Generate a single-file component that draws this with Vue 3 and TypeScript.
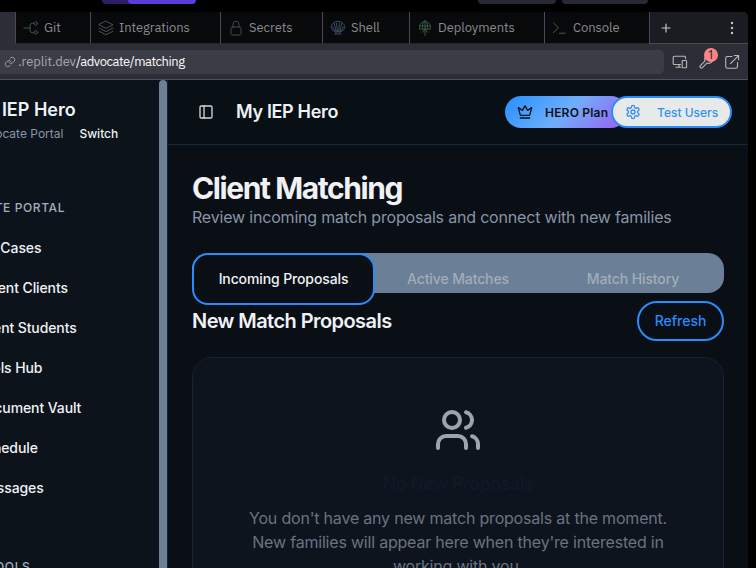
<script setup lang="ts">
interface ToolTab {
  name: string
  icon: string
  width: number
}

const tabs: ToolTab[] = [
  { name: 'Git', icon: 'git', width: 75 },
  { name: 'Integrations', icon: 'layers', width: 130 },
  { name: 'Secrets', icon: 'lock', width: 102 },
  { name: 'Shell', icon: 'shell', width: 87 },
  { name: 'Deployments', icon: 'deploy', width: 135 },
  { name: 'Console', icon: 'console', width: 105 },
]

const navItems: string[] = [
  'My Cases',
  'Parent Clients',
  'Client Students',
  'Tools Hub',
  'Document Vault',
  'Schedule',
  'Messages',
]
</script>

<template>
  <div class="screen">
    <div class="topstrip">
      <div class="pill purple"><span></span></div>
      <div class="pill grey first"></div>
      <div class="pill grey second"></div>
    </div>

    <div class="pane">
      <div class="tabs">
        <div class="tab-active"></div>
        <div v-for="tab in tabs" :key="tab.name" class="tab" :style="{ width: tab.width + 'px' }">
          <svg class="tab-icon" :class="tab.icon" viewBox="0 0 16 16">
            <g v-if="tab.icon === 'git'">
              <path d="M1 8h6M11 3.3H9.3Q7 3.3 7 5.6v4.8q0 2.3 2.3 2.3H11" />
              <circle cx="12.7" cy="3.5" r="1.7" /><circle cx="12.7" cy="12.3" r="1.7" />
            </g>
            <g v-else-if="tab.icon === 'layers'">
              <path d="M8 1.2L15 4.8 8 8.4 1 4.8zM1 8l7 3.6L15 8M1 11.2l7 3.6 7-3.6" />
            </g>
            <g v-else-if="tab.icon === 'lock'">
              <rect x="3" y="7" width="10" height="8" rx="1.5" />
              <path d="M5 7V4.2a3 3 0 0 1 6 0V7" />
            </g>
            <g v-else-if="tab.icon === 'shell'">
              <path d="M6 12.4L2 9.5C.2 6.5 2 3.6 4 3c1-1.6 2.5-2 4-1.4C9.500 1 11 1.400 12 3c2 .6 3.800 3.500 2 6.500l-4 2.900 1 1.600H5z" />
              <path d="M6.500 12L4 3M7.500 12L6.500 3M8.500 12l1-9M9.500 12L12 3M6 12L2 6.500M10 12l4-5.500" />
            </g>
            <g v-else-if="tab.icon === 'deploy'">
              <path d="M3 9.700a5.600 5.600 0 1 1 10 0M2.500 6h11M3.200 9h9.600M8 .900v14.500M8 .900C5 3 5 7 6 9M8 .900c3 2.100 3 6.100 2 8.100M5.300 12.300L8 9l2.700 3.300" />
            </g>
            <g v-else><path d="M1.500 3l5 4.800-5 4.800M7.500 13.200H13" /></g>
          </svg>
          <span>{{ tab.name }}</span>
        </div>
        <div class="tab-actions">
          <svg class="plus" viewBox="0 0 10 10"><path d="M5 1v8M1 5h8" /></svg>
          <svg class="dots" viewBox="0 0 4 14">
            <circle cx="2" cy="2" r="1.200" /><circle cx="2" cy="7" r="1.200" /><circle cx="2" cy="12" r="1.200" />
          </svg>
        </div>
      </div>

      <div class="urlbar">
        <div class="url">
          <svg class="link" viewBox="0 0 24 24">
            <path d="M10 13a5 5 0 0 0 7.500.500l3-3a5 5 0 0 0-7-7l-1.700 1.700M14 11a5 5 0 0 0-7.500-.500l-3 3a5 5 0 0 0 7 7l1.700-1.700" />
          </svg>
          <span class="host">.replit.dev</span><span class="path">/advocate/matching</span>
        </div>
        <svg class="tool devices" viewBox="0 0 16 16">
          <path d="M8.500 10.500H2.200Q1.200 10.500 1.200 9.500V3.200q0-1 1-1h10.300q1 0 1 1v1.300M7 10.500v2.700M4 13.300h4.500" />
          <rect x="10.200" y="6.500" width="4.400" height="7.300" rx=".7" />
        </svg>
        <div class="wrench">
          <svg class="tool" viewBox="0 0 24 24">
            <path d="M14.700 6.300a1 1 0 0 0 0 1.400l1.600 1.600a1 1 0 0 0 1.400 0l3.800-3.800a6 6 0 0 1-7.900 7.900l-6.900 6.900a2.100 2.100 0 0 1-3-3l6.900-6.900a6 6 0 0 1 7.900-7.900z" />
          </svg>
          <span class="badge">1</span>
        </div>
        <svg class="tool external" viewBox="0 0 16 16">
          <path d="M8 2.500H3.500q-1.800 0-1.800 1.800v8.200q0 1.800 1.800 1.800h8.200q1.800 0 1.800-1.800V8.500M10.300 1.500h4.300v4.300M14.500 1.600L6.500 9.600" />
        </svg>
      </div>

      <div class="app">
        <aside class="sidebar">
          <div class="sidebar-inner">
            <div class="brand">My IEP Hero</div>
            <div class="role"><span>Advocate Portal</span><b>Switch</b></div>
            <div class="group">ADVOCATE PORTAL</div>
            <nav>
              <a v-for="item in navItems" :key="item">{{ item }}</a>
            </nav>
            <div class="group tools">TOOLS</div>
          </div>
        </aside>
        <div class="scrollbar"></div>

        <main>
          <header>
            <svg class="panel" viewBox="0 0 24 24"><rect x="3" y="3" width="18" height="18" rx="2" /><path d="M9 3v18" /></svg>
            <h2>My IEP Hero</h2>
            <div class="hero">
              <svg viewBox="0 0 24 24">
                <path d="M11.562 3.266a.5.500 0 0 1 .876 0L15.390 8.870a1 1 0 0 0 1.516.294L21.183 5.500a.5.500 0 0 1 .798.519l-2.834 10.246a1 1 0 0 1-.956.734H5.810a1 1 0 0 1-.957-.734L2.020 6.020a.5.500 0 0 1 .798-.519l4.276 3.664a1 1 0 0 0 1.516-.294zM5 21h14" />
              </svg>
              <span>HERO Plan</span>
            </div>
            <div class="users">
              <svg viewBox="0 0 24 24">
                <path d="M12.220 2h-.440a2 2 0 0 0-2 2v.180a2 2 0 0 1-1 1.730l-.430.250a2 2 0 0 1-2 0l-.150-.080a2 2 0 0 0-2.730.730l-.220.380a2 2 0 0 0 .730 2.730l.150.100a2 2 0 0 1 1 1.720v.510a2 2 0 0 1-1 1.740l-.150.090a2 2 0 0 0-.730 2.730l.220.380a2 2 0 0 0 2.730.730l.150-.080a2 2 0 0 1 2 0l.430.250a2 2 0 0 1 1 1.730V20a2 2 0 0 0 2 2h.440a2 2 0 0 0 2-2v-.180a2 2 0 0 1 1-1.730l.430-.250a2 2 0 0 1 2 0l.150.080a2 2 0 0 0 2.730-.730l.220-.390a2 2 0 0 0-.730-2.730l-.150-.080a2 2 0 0 1-1-1.740v-.500a2 2 0 0 1 1-1.740l.150-.090a2 2 0 0 0 .730-2.730l-.220-.380a2 2 0 0 0-2.730-.730l-.150.080a2 2 0 0 1-2 0l-.430-.250a2 2 0 0 1-1-1.730V4a2 2 0 0 0-2-2z" />
                <circle cx="12" cy="12" r="3" />
              </svg>
              <span>Test Users</span>
            </div>
          </header>

          <section>
            <h1>Client Matching</h1>
            <p class="sub">Review incoming match proposals and connect with new families</p>
            <div class="segments">
              <div class="segment on">Incoming Proposals</div>
              <div class="segment">Active Matches</div>
              <div class="segment">Match History</div>
            </div>
            <div class="heading">
              <h3>New Match Proposals</h3>
              <button>Refresh</button>
            </div>
            <div class="card">
              <svg viewBox="0 0 24 24">
                <path d="M16 21v-2a4 4 0 0 0-4-4H6a4 4 0 0 0-4 4v2M22 21v-2a4 4 0 0 0-3-3.870M16 3.130a4 4 0 0 1 0 7.750" />
                <circle cx="9" cy="7" r="4" />
              </svg>
              <h4>No New Proposals</h4>
              <p>You don't have any new match proposals at the moment.<br>New families will appear here when they're interested in<br>working with you.</p>
            </div>
          </section>
        </main>
      </div>
    </div>
  </div>
</template>

<style>
body { margin: 0; background: #000; overflow: hidden; }
</style>

<style scoped>
* { box-sizing: border-box; }
h1, h2, h3, h4, p { margin: 0; }
svg { fill: none; stroke: currentColor; stroke-linecap: round; stroke-linejoin: round; flex: none; }
.screen { width: 756px; height: 568px; overflow: hidden; background: #000; font-family: Inter, "Liberation Sans", sans-serif; }
.topstrip { height: 12px; display: flex; padding-left: 102px; }
.pill { height: 4px; border-radius: 0 0 4px 4px; overflow: hidden; }
.purple { width: 94px; background: #2d1e67; }
.purple span { display: block; height: 4px; margin-left: 26px; background: #593cda; border-radius: 0 0 4px 4px; }
.grey { background: #282a31; }
.first { width: 78px; margin-left: 282px; }
.second { width: 86px; margin-left: 6px; }
.pane { width: 748px; height: 556px; border-radius: 0 5px 0 0; overflow: hidden; background: #2b2e35; display: flex; flex-direction: column; }
.tabs { height: 32px; display: flex; flex: none; }
.tab-active { width: 15px; background: #2b2e35; }
.tab { display: flex; align-items: center; gap: 5px; height: 32px; padding-left: 7px; background: #08090b; border-left: 1px solid #464b5c; border-bottom: 1px solid #24262c; color: #888a8e; font: 13px/18px "IBM Plex Sans", "Noto Sans", sans-serif; letter-spacing: -.06px; white-space: nowrap; }
.tab-icon { width: 16px; height: 16px; color: #4c4f54; stroke-width: 1; }
.tab-icon.git, .tab-icon.deploy { color: #3a5a45; }
.tab-icon.shell { color: #405269; stroke-width: .9; }
.tab-icon.console { color: #5b5740; }
.tab-icon.lock { color: #45484c; }
.tab-actions { flex: 1; display: flex; align-items: center; justify-content: space-between; padding: 0 14px 0 11px; background: #1b1c21; border-left: 1px solid #464b5c; border-bottom: 1px solid #464b5c; color: #c4c6ca; }
.plus { width: 10px; height: 10px; stroke-width: 1.2; }
.dots { width: 4px; height: 14px; fill: currentColor; stroke: none; }
.urlbar { height: 36px; flex: none; display: flex; align-items: center; background: #2b2e35; border-bottom: 1px solid #4c5264; color: #b6b8bc; }
.url { width: 664px; height: 24px; border-radius: 0 5px 5px 0; background: #3a3d45; display: flex; align-items: center; padding-left: 4px; font: 13px/18px "IBM Plex Sans", "Noto Sans", sans-serif; }
.link { width: 12px; height: 12px; stroke-width: 2; color: #9a9ca1; margin-right: 2px; }
.host { color: #a5a7ac; letter-spacing: -.05px; }
.path { color: #fafafa; letter-spacing: -.48px; }
.tool { width: 16px; height: 16px; stroke-width: 1.1; }
.devices { margin-left: 8px; }
.wrench { position: relative; display: flex; margin-left: 10px; }
.wrench .tool { stroke-width: 1.7; }
.badge { position: absolute; left: 6px; top: -6px; width: 14px; height: 14px; border-radius: 7px; background: #fb8584; color: #23252b; font: 12px/14px "Noto Sans", sans-serif; text-align: center; }
.external { margin-left: 10px; }
.app { flex: 1; min-height: 0; display: flex; background: #0a0e15; }
.sidebar { width: 159px; overflow: hidden; background: #0c131a; }
.sidebar-inner { margin-left: -88px; white-space: nowrap; }
.brand { padding: 18px 0 0 58px; font-size: 18px; font-weight: 600; line-height: 24px; color: #eff2f5; }
.role { display: flex; gap: 16px; padding: 3px 0 0 61px; font-size: 12px; line-height: 18px; color: #8996a7; }
.role b { font-weight: 500; color: #eff2f5; }
.group { margin-top: 57px; padding-left: 29px; font-size: 12px; line-height: 16px; font-weight: 500; letter-spacing: .6px; color: #a3afbf; }
nav { margin-top: 12px; }
nav a { display: block; height: 40px; padding-left: 64px; font-size: 14px; font-weight: 500; line-height: 40px; letter-spacing: -.1px; color: #eff2f5; }
.group.tools { margin-top: 51px; padding-left: 75px; }
.scrollbar { width: 8px; background: #6b8096; border-radius: 4px 4px 0 0; }
main { flex: 1; min-width: 0; border-left: 1px solid #142332; overflow: hidden; }
header { height: 65px; display: flex; align-items: center; padding-left: 30px; background: #080f15; border-bottom: 1px solid #12283a; }
.panel { width: 16px; height: 16px; stroke-width: 2; color: #d3d5d5; }
h2 { margin-left: 22px; width: 269px; font-size: 18px; line-height: 28px; font-weight: 600; letter-spacing: -.33px; color: #eff2f5; }
.hero, .users { display: flex; align-items: center; height: 32px; border-radius: 16px; font-size: 12px; font-weight: 500; white-space: nowrap; }
.hero { width: 122px; padding-left: 12px; gap: 12px; flex: none; background: linear-gradient(135deg, #2490ff 0%, #70aef9 50%, #9b5df2 100%); color: #0b111b; font-weight: 600; letter-spacing: .2px; }
.hero svg, .users svg { width: 16px; height: 16px; stroke-width: 2; }
.users { position: relative; flex: none; width: 121px; margin-left: -16px; padding-left: 12px; gap: 16px; border: 2px solid #288dfc; background: #e8eae9; color: #3090f7; }
section { padding: 24px 24px 0; }
h1 { height: 36px; font-size: 30px; line-height: 38px; font-weight: 700; letter-spacing: -1.42px; color: #eff1f5; }
.sub { font-size: 16px; line-height: 24px; letter-spacing: -.19px; color: #8795a6; white-space: nowrap; }
.segments { display: flex; height: 40px; margin-top: 24px; border-radius: 16px; background: #6b8096; color: #a2adba; font-size: 14px; font-weight: 500; line-height: 52px; letter-spacing: -.12px; text-align: center; }
.segment { width: 174px; height: 52px; }
.segment.on { width: 183px; line-height: 48px; border: 2px solid #288dfc; border-radius: 16px; background: #0a0e15; color: #eff2f5; }
.segment:nth-child(2) { padding-right: 8px; }
.segment:nth-child(3) { padding-right: 6px; }
.heading { display: flex; justify-content: space-between; align-items: center; margin-top: 8px; height: 40px; }
h3 { font-size: 20px; font-weight: 600; line-height: 28px; letter-spacing: -.56px; color: #eff2f5; }
button { width: 87px; height: 40px; padding: 0; border: 2px solid #288dfc; border-radius: 20px; background: transparent; color: #288dfc; font: 500 14px/20px Inter, sans-serif; }
.card { margin-top: 16px; height: 260px; border: 1px solid #142430; border-radius: 20px; background: #0d141d; display: flex; flex-direction: column; align-items: center; padding-top: 48px; text-align: center; }
.card svg { width: 48px; height: 48px; stroke-width: 2; color: #9da3af; }
h4 { margin-top: 16px; font-size: 18px; font-weight: 600; line-height: 28px; letter-spacing: -.55px; color: #111827; }
.card p { margin-top: 8px; font-size: 16px; line-height: 24px; letter-spacing: -.2px; color: #6b7280; white-space: nowrap; }
</style>
